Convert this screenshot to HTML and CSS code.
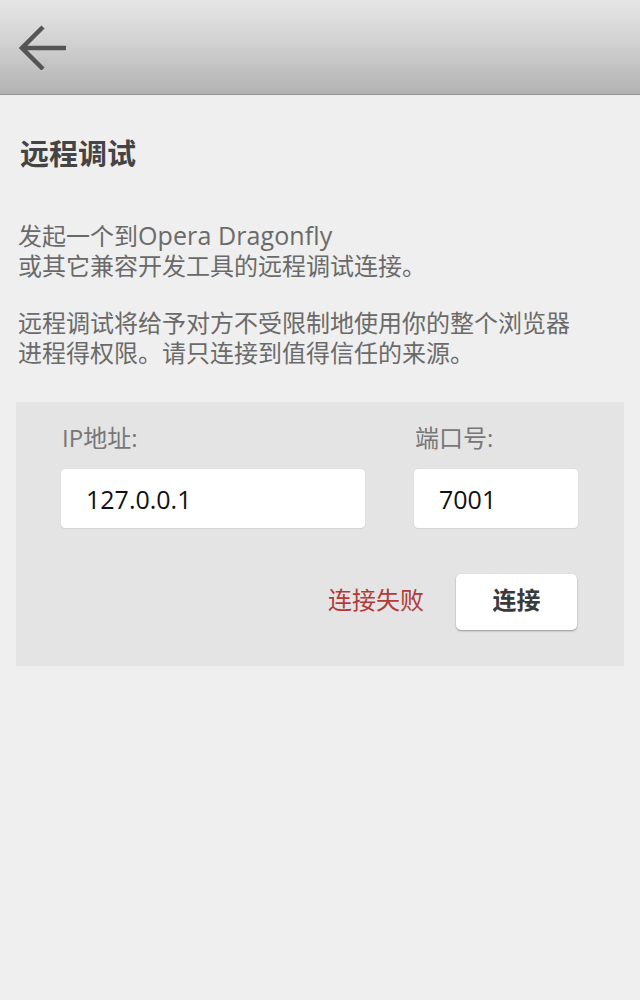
FILE: index.html
```html
<!DOCTYPE html>
<html lang="zh-CN">
<head>
<meta charset="utf-8">
<title>远程调试</title>
<link rel="stylesheet" href="styles.css">
</head>
<body>
<header class="topbar">
  <button class="back" aria-label="返回">
    <svg width="48" height="46" viewBox="0 0 48 46" aria-hidden="true">
      <path d="M24 3 L3 24 L24 45 M3 24 H47" fill="none" stroke="#555" stroke-width="4.5" stroke-linejoin="miter"/>
    </svg>
  </button>
</header>
<main class="content">
  <h1 class="title">远程调试</h1>
  <p class="desc">发起一个到<span class="latin">Opera Dragonfly</span><br>或其它兼容开发工具的远程调试连接。</p>
  <p class="desc desc-second">远程调试将给予对方不受限制地使用你的整个浏览器<br>进程得权限。请只连接到值得信任的来源。</p>
  <section class="panel">
    <div class="fields">
      <label class="field field-ip">
        <span class="label">IP地址:</span>
        <input class="input" type="text" value="127.0.0.1">
      </label>
      <label class="field field-port">
        <span class="label">端口号:</span>
        <input class="input" type="text" value="7001">
      </label>
    </div>
    <div class="actions">
      <span class="status">连接失败</span>
      <button class="connect">连接</button>
    </div>
  </section>
</main>
</body>
</html>
```
FILE: styles.css
```css
html, body {
  margin: 0;
  padding: 0;
}
body {
  background: #efefef;
  font-family: "Open Sans", Roboto, "Noto Sans CJK SC", sans-serif;
  color: #666;
  width: 640px;
  min-height: 1000px;
}
.topbar {
  height: 94px;
  border-bottom: 1px solid #959595;
  background: linear-gradient(to bottom, #e6e6e6 0%, #d2d2d2 45%, #b2b2b2 100%);
  display: flex;
  align-items: center;
  box-sizing: content-box;
}
.back {
  margin: 0 0 0 19px;
  padding: 0;
  border: 0;
  background: none;
  width: 48px;
  height: 46px;
  display: block;
}
.back svg {
  display: block;
}
.content {
  padding: 0 16px;
}
.title {
  margin: 42px 0 0 4px;
  font-size: 29px;
  line-height: 34px;
  font-weight: 700;
  color: #444;
}
.desc {
  margin: 49px 0 0 2px;
  font-size: 24px;
  line-height: 30px;
  color: #6a6a6a;
}
.latin {
  font-size: 25px;
  letter-spacing: 0.1px;
}
.desc-second {
  margin-top: 27px;
}
.panel {
  margin-top: 34px;
  background: #e4e4e4;
  padding: 21px 46px 36px 45px;
}
.fields {
  display: flex;
  gap: 49px;
}
.field {
  display: flex;
  flex-direction: column;
  gap: 16px;
}
.field-ip {
  width: 304px;
}
.field-port {
  width: 164px;
}
.label {
  font-size: 24px;
  line-height: 30px;
  color: #777;
  padding-left: 1px;
}
.input {
  box-sizing: border-box;
  height: 59px;
  width: 100%;
  margin: 0;
  border: 0;
  border-radius: 4px;
  background: #fff;
  box-shadow: 0 0 1px rgba(0,0,0,0.18), 0 1px 1px rgba(0,0,0,0.06);
  padding: 0 0 0 25px;
  font-family: "Open Sans", Roboto, "Noto Sans CJK SC", sans-serif;
  font-size: 25px;
  color: #111;
  outline: none;
}
.actions {
  margin-top: 46px;
  display: flex;
  justify-content: flex-end;
  align-items: center;
  gap: 32px;
}
.status {
  font-size: 24px;
  line-height: 30px;
  padding-bottom: 5px;
  color: #b23a3a;
}
.connect {
  width: 121px;
  height: 56px;
  margin: 0 1px 0 0;
  padding: 0 0 8px;
  border: 0;
  border-radius: 5px;
  background: #fff;
  box-shadow: 0 1px 2px rgba(0,0,0,0.35);
  font-family: "Open Sans", Roboto, "Noto Sans CJK SC", sans-serif;
  font-size: 24px;
  font-weight: 700;
  color: #3a3a3a;
}
```
